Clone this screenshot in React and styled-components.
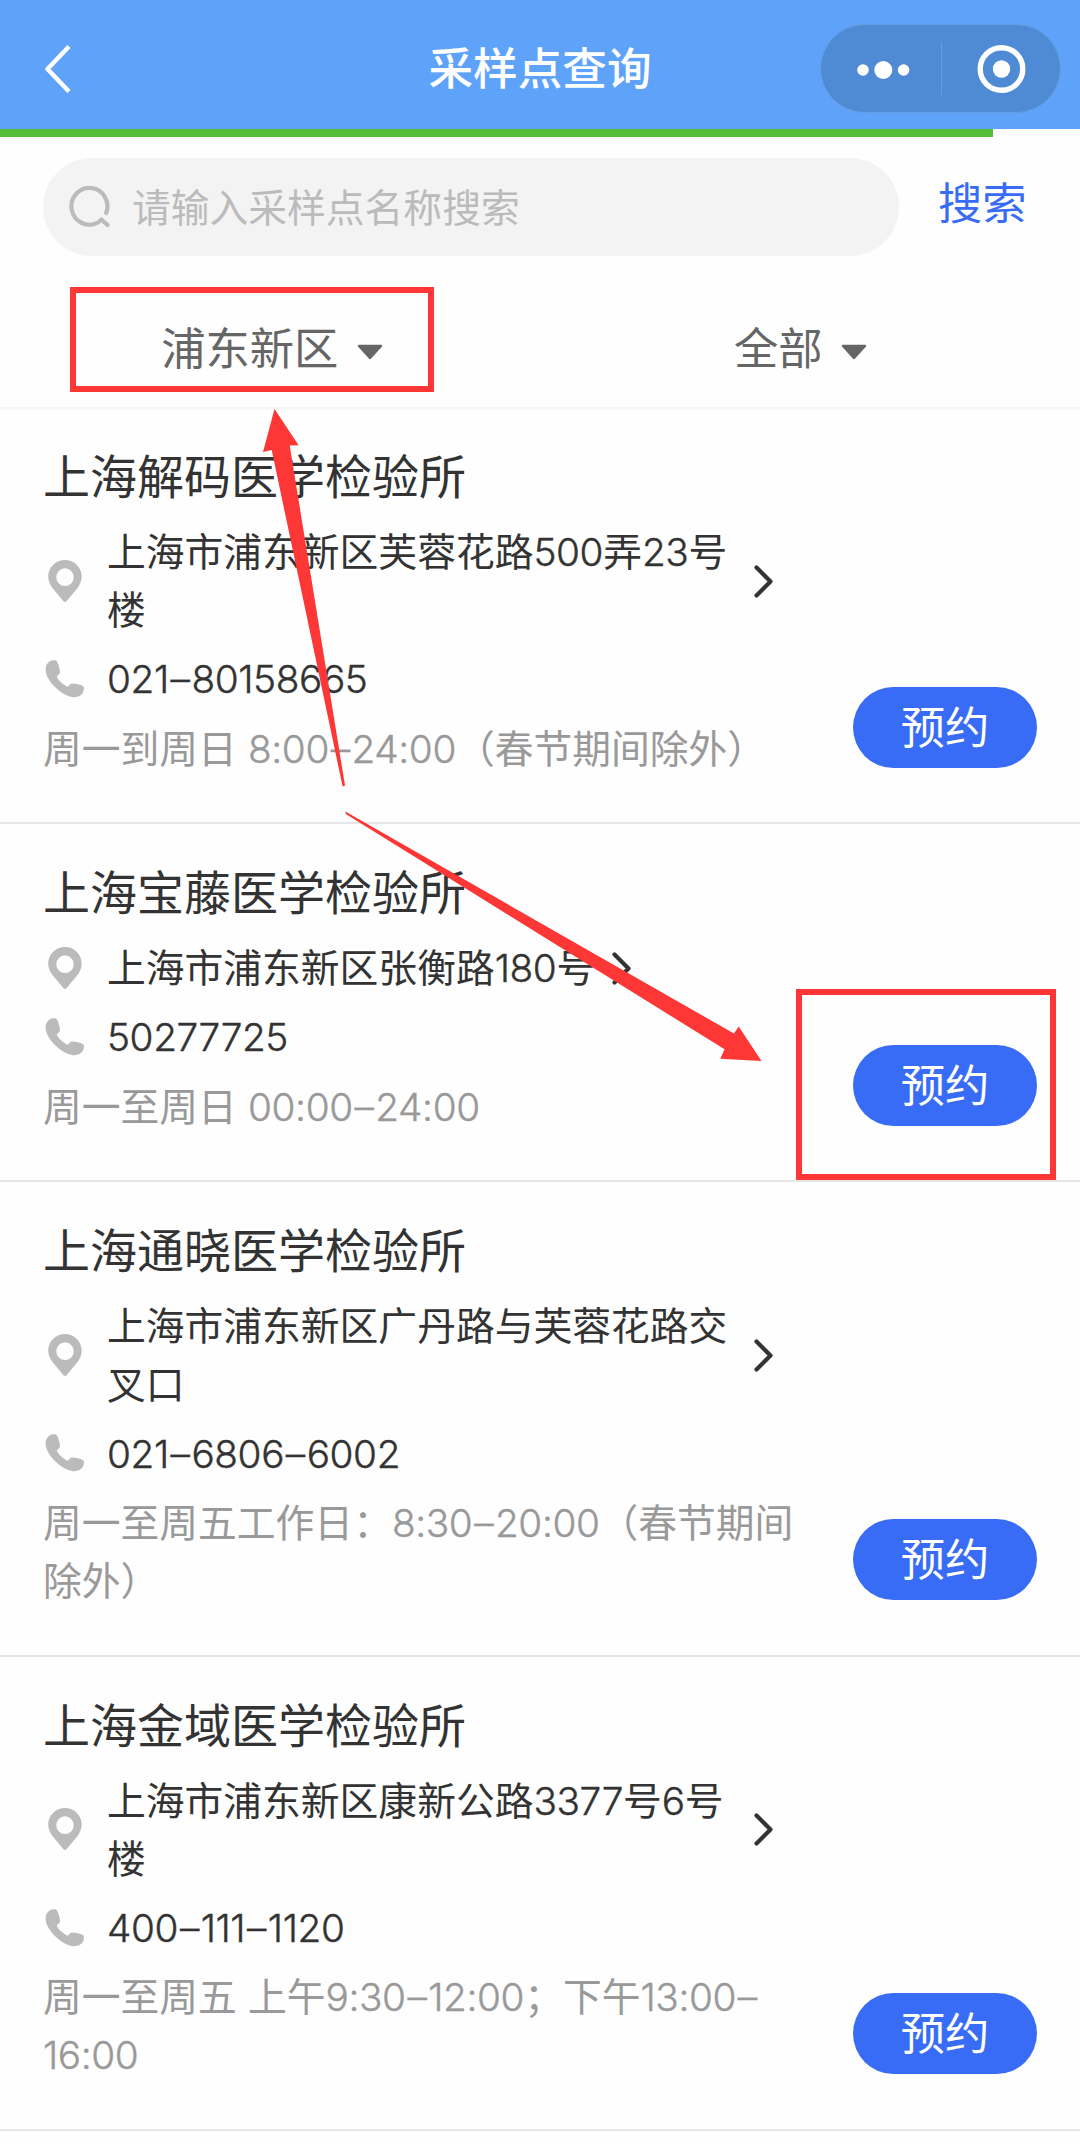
import styled, { createGlobalStyle } from "styled-components";

const GlobalStyle = createGlobalStyle`
  * {
    box-sizing: border-box;
  }

  body {
    margin: 0;
    background: #fefefe;
    font-family: "Noto Sans CJK SC", sans-serif;
  }
`;

const Page = styled.div`
  position: relative;
  width: 1080px;
  height: 2144px;
  overflow: hidden;
  color: #333;
`;

const Header = styled.header`
  display: grid;
  grid-template-columns: 1fr auto 1fr;
  align-items: center;
  height: 129px;
  padding: 0 19px;
  background: #5ea3f9;
`;

const BackIcon = styled.svg`
  width: 28px;
  height: 52px;
  margin: 8px 0 0 25px;
`;

const Title = styled.h1`
  margin: 2px 0 0 0;
  font-size: 44.6px;
  font-weight: 500;
  line-height: 64px;
  color: #fff;
`;

const Capsule = styled.div`
  display: flex;
  justify-self: end;
  align-items: center;
  width: 241px;
  height: 89px;
  margin-top: 8px;
  border: 1px solid #659edf;
  border-radius: 45px;
  background: #4f8bd4;
`;

const CapsuleDivider = styled.div`
  width: 1px;
  height: 53px;
  background: #689cdc;
`;

const ProgressTrack = styled.div`
  height: 9px;
`;

const Progress = styled.div`
  width: 993px;
  height: 8.4px;
  background: #55bd37;
`;

const SearchBar = styled.div`
  display: flex;
  align-items: center;
  height: 138px;
  padding: 0 0 0 43px;
`;

const SearchBox = styled.div`
  display: flex;
  align-items: center;
  gap: 19px;
  width: 856px;
  height: 98px;
  padding-left: 26px;
  border-radius: 49px;
  background: #f3f3f3;
`;

const Placeholder = styled.span`
  margin-bottom: 5px;
  font-size: 38.77px;
  line-height: 56px;
  color: #bbb;
`;

const SearchButton = styled.span`
  margin: -13px 0 0 39px;
  font-size: 44.3px;
  line-height: 64px;
  color: #386cf7;
`;

const Filters = styled.div`
  display: grid;
  grid-template-columns: 544px 513px;
  height: 131px;
`;

const Filter = styled.div`
  display: flex;
  align-items: center;
  justify-content: center;
  gap: 18.5px;
  padding-top: 9px;
  font-size: 44.3px;
  line-height: 64px;
  color: #666;

  svg {
    margin-top: 11px;
  }
`;

const Item = styled.section`
  display: flex;
  justify-content: space-between;
  align-items: flex-end;
  padding: 33.2px 43px 44.9px 43px;
  border-top: 2px solid #e6e6e6;

  &:first-child {
    padding-top: 31.1px;
    border-top: 3px solid #f7f7f7;
  }

  &:last-child {
    padding-bottom: 0;
  }
`;

const ItemBody = styled.div`
  width: 756px;
`;

const Name = styled.h2`
  margin: 0 0 15.5px 0;
  font-size: 47px;
  font-weight: 400;
  line-height: 66px;
`;

const InfoRow = styled.div`
  display: flex;
  align-items: center;
  margin-bottom: 11px;
  font-size: 38.77px;
  line-height: 58.15px;

  > svg {
    flex: none;
  }
`;

const InfoText = styled.span`
  max-width: 630px;
  margin: -2.5px 17px 2.5px 21px;
`;

const Hours = styled.div`
  margin: -2.5px 0 2.5px 0;
  font-size: 38.77px;
  line-height: 58.15px;
  word-spacing: 2.5px;
  color: #999;
`;

const Latin = styled.span`
  font-family: "Inter", "Noto Sans CJK SC", sans-serif;
  font-weight: 300;
  line-height: 1;
  letter-spacing: -0.4px;
  -webkit-text-stroke: 0.4px currentColor;
`;

const Dash = styled.span`
  padding: 0 1.8px;
`;

const BookButton = styled.button`
  flex: none;
  width: 184px;
  height: 81px;
  margin-bottom: 9.5px;
  padding: 0 0 5px 0;
  border: none;
  border-radius: 41px;
  background: #386cf7;
  font-family: inherit;
  font-size: 44.3px;
  line-height: 64px;
  color: #fff;
`;

/* Marks drawn over the page */
const Highlight = styled.div`
  position: absolute;
  left: ${({ $x }) => $x}px;
  top: ${({ $y }) => $y}px;
  width: ${({ $w }) => $w}px;
  height: ${({ $h }) => $h}px;
  border: 6.5px solid #fd3636;
`;

const Arrows = styled.svg`
  position: absolute;
  left: 0;
  top: 0;
  pointer-events: none;
`;

const CaretIcon = () => (
  <svg width="26" height="16" viewBox="0 0 26 16">
    <path d="M2 2H24L13 14Z" fill="#666" stroke="#666" strokeWidth="2.4" strokeLinejoin="round" />
  </svg>
);

const SearchIcon = () => (
  <svg width="44" height="42" viewBox="0 0 44 42" fill="none" stroke="#bbb" strokeWidth="4.2">
    <path d="M37.200 27A18 18.400 0 1 0 29 36.500L32.500 33.500L38.500 39" strokeLinejoin="round" strokeLinecap="round" />
  </svg>
);

const PinIcon = () => (
  <svg width="43" height="44" viewBox="0 0 43 44">
    <path
      fill="#bbb"
      fillRule="evenodd"
      d="M22 1C12.700 1 5.200 8.500 5.200 17.700C5.200 22.500 7.500 26.800 10.500 30.300L20.500 42.200Q22 43.800 23.500 42.200L33.500 30.300C36.500 26.800 38.700 22.500 38.700 17.700C38.700 8.500 31.300 1 22 1ZM22 9.300A8.700 8.900 0 1 1 22 27.100A8.700 8.900 0 1 1 22 9.300Z"
    />
  </svg>
);

const PhoneIcon = () => (
  <svg width="43" height="44" viewBox="0 -0.5 43 44">
    <path
      fill="#bbb"
      d="M6.500 4C9 2.700 12.500 2.200 14 4C15.300 6 16.600 11 17 14C17.300 17 14.500 17.200 13.800 19.200C15.500 23 20.500 27.500 24.800 29.200C26.300 29 26.300 26 29.300 26C32.500 26.200 37.500 27 39.800 28.600C41.700 30 41 33.500 39.800 35.500C37.500 39 33.500 40 29.500 39.700C20.500 38.500 8 28 4 18.500C2 13.500 1.500 7.500 6.500 4Z"
    />
  </svg>
);

const ChevronIcon = () => (
  <svg width="20" height="34" viewBox="0 -0.5 20 34">
    <path d="M2.500 3L16.500 17L2.500 31" fill="none" stroke="#333" strokeWidth="4.2" strokeLinecap="round" strokeLinejoin="round" />
  </svg>
);

// Digits and half-width punctuation get their own font
const MixedText = ({ text }) =>
  text.split(/([0-9:]+|–)/).map((part, i) => {
    if (i % 2 === 0) return part;
    return <Latin key={i}>{part === "–" ? <Dash>–</Dash> : part}</Latin>;
  });

const sites = [
  {
    name: "上海解码医学检验所",
    address: "上海市浦东新区芙蓉花路500弄23号楼",
    phone: "021–80158665",
    hours: "周一到周日 8:00–24:00（春节期间除外）",
  },
  {
    name: "上海宝藤医学检验所",
    address: "上海市浦东新区张衡路180号",
    phone: "50277725",
    hours: "周一至周日 00:00–24:00",
  },
  {
    name: "上海通晓医学检验所",
    address: "上海市浦东新区广丹路与芙蓉花路交叉口",
    phone: "021–6806–6002",
    hours: "周一至周五工作日：8:30–20:00（春节期间除外）",
  },
  {
    name: "上海金域医学检验所",
    address: "上海市浦东新区康新公路3377号6号楼",
    phone: "400–111–1120",
    hours: "周一至周五 上午9:30–12:00；下午13:00–16:00",
  },
];

const SiteItem = ({ site }) => (
  <Item>
    <ItemBody>
      <Name>{site.name}</Name>
      <InfoRow>
        <PinIcon />
        <InfoText>
          <MixedText text={site.address} />
        </InfoText>
        <ChevronIcon />
      </InfoRow>
      <InfoRow>
        <PhoneIcon />
        <InfoText>
          <MixedText text={site.phone} />
        </InfoText>
      </InfoRow>
      <Hours>
        <MixedText text={site.hours} />
      </Hours>
    </ItemBody>
    <BookButton>预约</BookButton>
  </Item>
);

export default function App() {
  return (
    <Page>
      <GlobalStyle />
      <Header>
        <BackIcon viewBox="0 0 28 52">
          <path d="M25 3.500L3.500 26L25 48.500" fill="none" stroke="#fff" strokeWidth="4.4" strokeLinejoin="round" />
        </BackIcon>
        <Title>采样点查询</Title>
        <Capsule>
          <svg width="120" height="60" viewBox="0 0 120 60" fill="#fff">
            <circle cx="42" cy="31" r="5.800" />
            <circle cx="62.300" cy="31" r="9" />
            <circle cx="82.600" cy="31" r="5.800" />
          </svg>
          <CapsuleDivider />
          <svg width="118" height="60" viewBox="0 0 118 60">
            <circle cx="59.500" cy="30" r="21.300" fill="none" stroke="#fff" strokeWidth="5.400" />
            <circle cx="59.500" cy="30" r="8.700" fill="#fff" />
          </svg>
        </Capsule>
      </Header>
      <ProgressTrack>
        <Progress />
      </ProgressTrack>
      <SearchBar>
        <SearchBox>
          <SearchIcon />
          <Placeholder>请输入采样点名称搜索</Placeholder>
        </SearchBox>
        <SearchButton>搜索</SearchButton>
      </SearchBar>
      <Filters>
        <Filter>
          浦东新区
          <CaretIcon />
        </Filter>
        <Filter>
          全部
          <CaretIcon />
        </Filter>
      </Filters>
      <div>
        {sites.map(site => (
          <SiteItem key={site.name} site={site} />
        ))}
        <Item />
      </div>

      <Highlight $x={70} $y={287} $w={364} $h={105} />
      <Highlight $x={795.5} $y={989} $w={260.5} $h={190.5} />
      <Arrows width="1080" height="2144" viewBox="0 0 1080 2144" fill="#fd3636">
        <path d="M274.500 409L298.600 445.300L289.700 445.600L345 785.500L342.600 786.500L271.700 450L263 452Z" />
        <path d="M345.400 811.500L733.900 1033.500L738.700 1026.500L761.500 1061L720.300 1058.700L724.600 1049.300L345.800 814Z" />
      </Arrows>
    </Page>
  );
}
